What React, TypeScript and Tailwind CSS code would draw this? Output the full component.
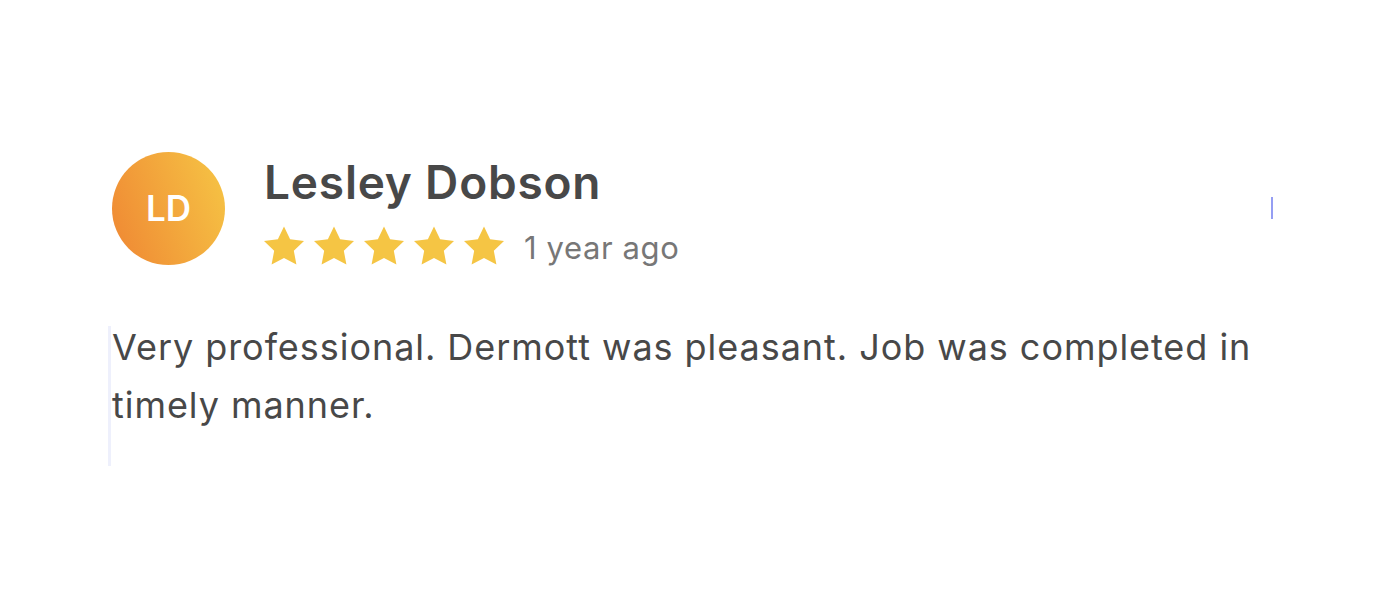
import React from "react";

const Star = () => (
  <svg width="40" height="39" viewBox="1.2 1.2 21.6 20.6" className="block">
    <path
      d="M12 1.2l3.3 6.9 7.5 1-5.5 5.2 1.4 7.5L12 18.2l-6.7 3.6 1.4-7.5L1.2 9.1l7.5-1z"
      fill="#F5C544"
    />
  </svg>
);

export default function App() {
  return (
    <div className="w-[1400px] h-[600px] bg-white relative" style={{ fontFamily: "Inter, 'Noto Sans', sans-serif" }}>
      <div className="absolute left-[1271px] top-[197px] w-[2px] h-[22px] bg-[#7a86f0] opacity-80" />
      <div className="pt-[152px] pl-[112px]">
        <div className="flex items-start gap-[39px]">
          <div className="w-[113px] h-[113px] rounded-full bg-[linear-gradient(70deg,#EF8633,#F6C645)] flex items-center justify-center text-white font-semibold text-[35px]">
            LD
          </div>
          <div className="pt-[2px]">
            <div className="text-[46px] leading-[56px] font-semibold tracking-[0.8px] text-[#484848]">Lesley Dobson</div>
            <div className="flex items-center mt-[9px]">
              <div className="flex gap-[10px]">
                <Star /><Star /><Star /><Star /><Star />
              </div>
              <div className="ml-[20px] text-[31px] tracking-[0.6px] text-[#777777] pt-[6px]">1 year ago</div>
            </div>
          </div>
        </div>
        <div className="relative mt-[46px] w-[1170px]">
          <div className="absolute left-[-4px] top-[8px] w-[3px] h-[140px] bg-[#eef0fc]" />
          <p className="text-[36px] leading-[58px] tracking-[0.95px] text-[#484848]">
            Very professional. Dermott was pleasant. Job was completed in timely manner.
          </p>
        </div>
      </div>
    </div>
  );
}
